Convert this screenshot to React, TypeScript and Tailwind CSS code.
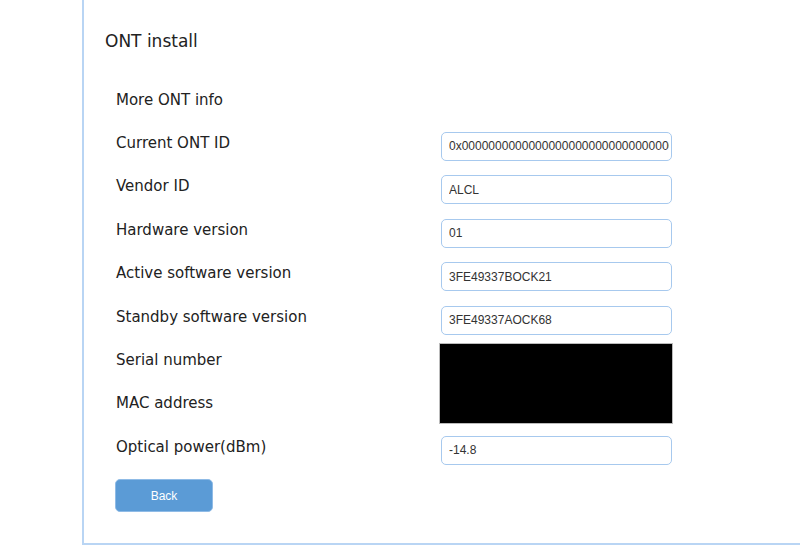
const rows: { label: string; value?: string; hidden?: boolean }[] = [
  { label: 'More ONT info' },
  { label: 'Current ONT ID', value: '0x00000000000000000000000000000000' },
  { label: 'Vendor ID', value: 'ALCL' },
  { label: 'Hardware version', value: '01' },
  { label: 'Active software version', value: '3FE49337BOCK21' },
  { label: 'Standby software version', value: '3FE49337AOCK68' },
  { label: 'Serial number', value: '', hidden: true },
  { label: 'MAC address', value: '', hidden: true },
  { label: 'Optical power(dBm)', value: '-14.8' },
];

export default function App() {
  return (
    <div className="w-[800px] h-[545px] bg-white overflow-hidden pl-[82px]">
      <div className="h-[545px] border-l-2 border-b-2 border-[#b9d5f4] pl-[21px] pt-[29px] text-[#222]" style={{ fontFamily: '"DejaVu Sans", Verdana, sans-serif' }}>
        <h2 className="text-[17px] leading-[24px]">ONT install</h2>
        <div className="mt-[35.6px] pl-[11px] relative">
          {rows.map((r) => (
            <div key={r.label} className="flex items-start h-[43.4px]">
              <div className="w-[325px] pt-[1px] text-[15px] leading-[21px]">{r.label}</div>
              {r.value !== undefined && (
                <input
                  readOnly
                  value={r.value}
                  className="w-[231px] h-[29px] border-[1.5px] border-[#a7c9ee] rounded-[5px] pl-[7px] pr-[2px] text-[12px] text-[#333] outline-none bg-white"
                  style={{ fontFamily: '"Liberation Sans", Arial, sans-serif' }}
                />
              )}
            </div>
          ))}
          {/* redacted serial / MAC */}
          <div className="absolute left-[334px] top-[254.4px] w-[234px] h-[81px] bg-black border border-[#bbb]" />
          <button
            className="w-[98px] h-[33px] -ml-[1px] rounded-[5px] bg-[#5b9bd6] border border-[#8fbbe6] text-white text-[12px]"
            style={{ fontFamily: '"Liberation Sans", Arial, sans-serif' }}
          >
            Back
          </button>
        </div>
      </div>
    </div>
  );
}
